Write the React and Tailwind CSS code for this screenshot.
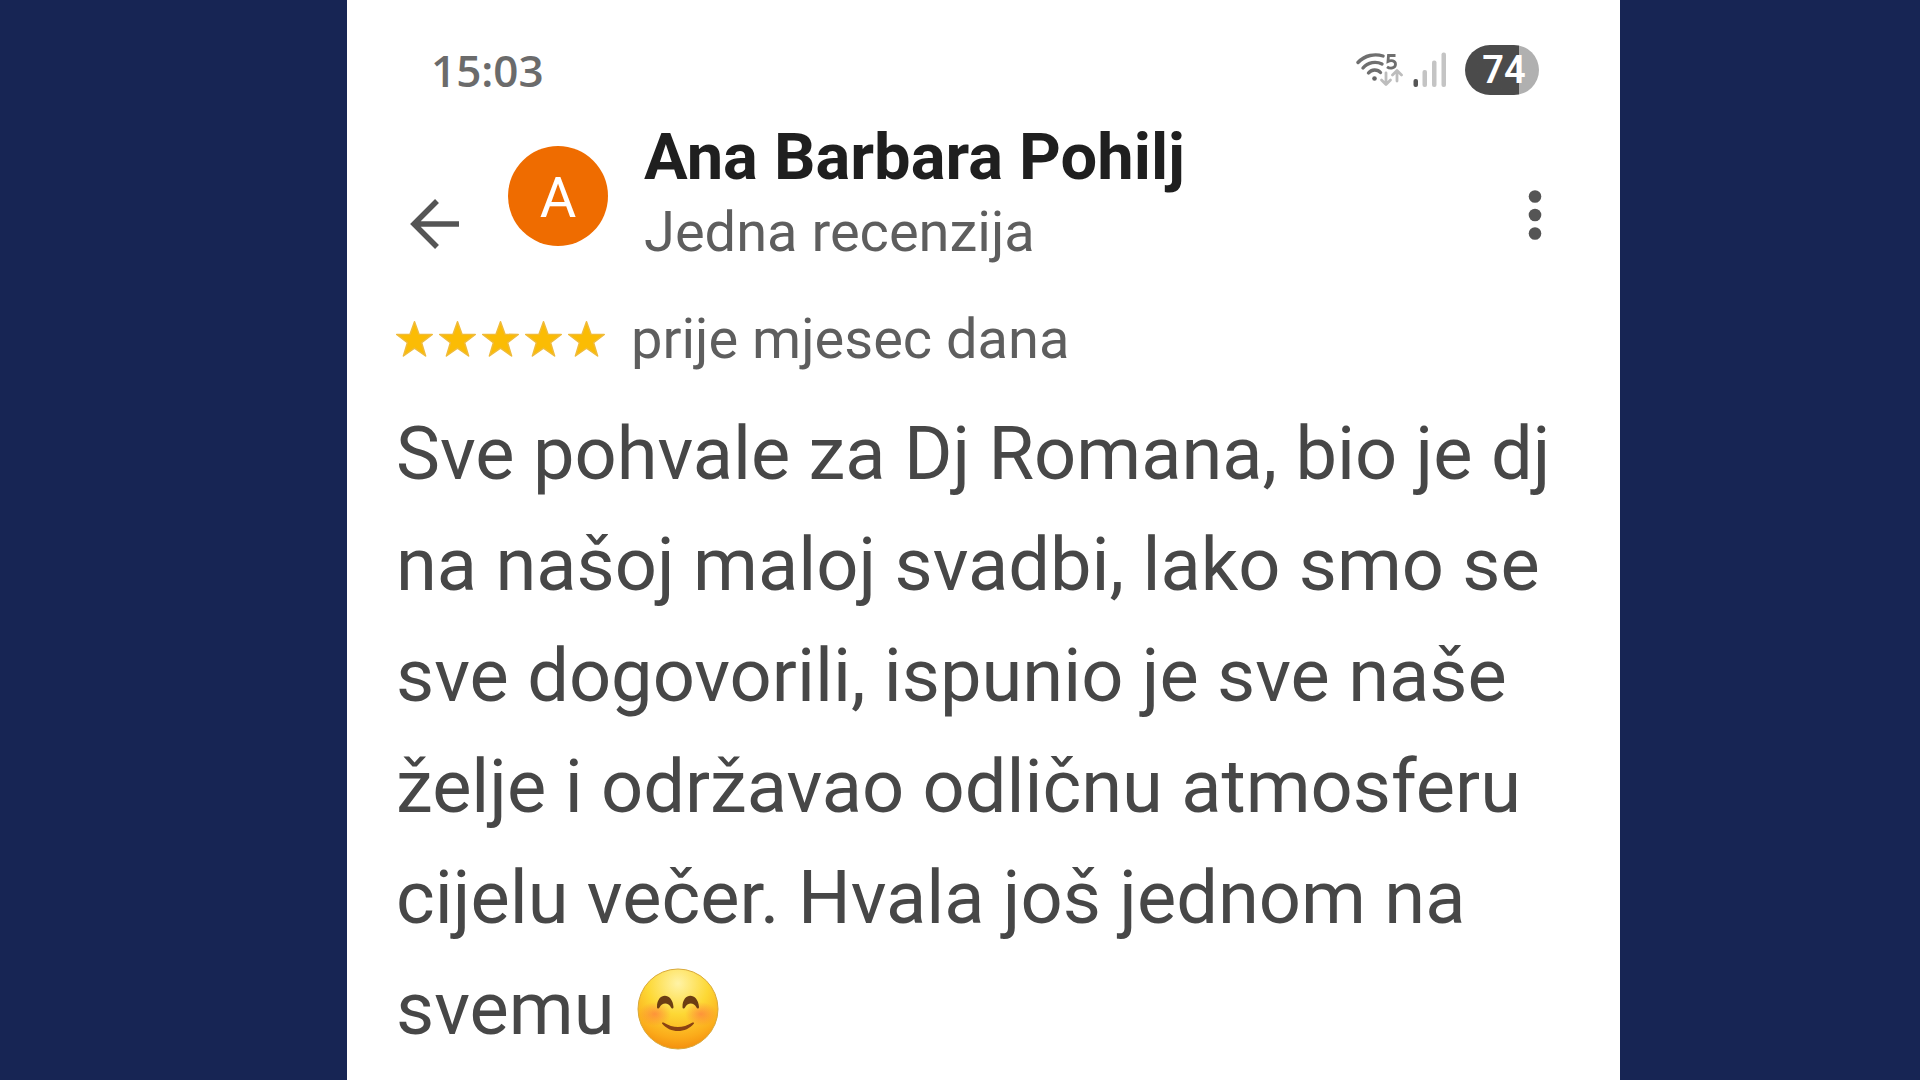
const reviewLines = [
  "Sve pohvale za Dj Romana, bio je dj",
  "na našoj maloj svadbi, lako smo se",
  "sve dogovorili, ispunio je sve naše",
  "želje i održavao odličnu atmosferu",
  "cijelu večer. Hvala još jednom na",
];

function WifiIcon() {
  return (
    <svg width="47" height="36" viewBox="0 0 47 36" fill="none" aria-label="Wi-Fi 5">
      <g stroke="#6f6f6f" strokeWidth="3.400" strokeLinecap="round">
        <path d="M2 10.500C9 3 19 1.500 27 4" />
        <path d="M7 16C12 10 20 9 26 12" />
        <path d="M12.500 21C15.500 17 21.500 17 24.500 20.500" />
      </g>
      <circle cx="18.500" cy="26.500" r="2.300" fill="#666" />
      <path d="M39.500 3.500H32.500L32 9.500C35 8 39.500 8.500 39.500 12.300C39.500 16.300 34 17 31 14.800" stroke="#6f6f6f" strokeWidth="2.800" />
      <g stroke="#bdbdbd" strokeWidth="2.800" strokeLinecap="round" strokeLinejoin="round">
        <path d="M30 21V32M25.500 28L30 32.500L34.500 28" />
        <path d="M41 29V19M36.500 23L41 18.500L45.500 23" />
      </g>
    </svg>
  );
}

function SignalIcon() {
  return (
    <svg width="34" height="36" viewBox="0 0 34 36" aria-label="Signal">
      <rect x="0.500" y="27" width="4.500" height="8" rx="2" fill="#555" />
      <rect x="9.500" y="18" width="4.500" height="17" rx="2" fill="#c4c4c4" />
      <rect x="19" y="8.500" width="4.500" height="26.500" rx="2" fill="#c4c4c4" />
      <rect x="28.500" y="0.500" width="4.500" height="34.500" rx="2" fill="#c4c4c4" />
    </svg>
  );
}

function BackIcon() {
  return (
    <svg width="50" height="50" viewBox="0 0 50 50" fill="none" stroke="#555" strokeWidth="5.500">
      <path d="M49 25H4M27 2L4 25L27 48" />
    </svg>
  );
}

function DotsIcon() {
  return (
    <svg width="14" height="52" viewBox="0 0 14 52" fill="#555">
      <circle cx="7" cy="7.500" r="6.300" />
      <circle cx="7" cy="26" r="6.300" />
      <circle cx="7" cy="44.500" r="6.300" />
    </svg>
  );
}

function Star() {
  return (
    <svg width="37" height="36" viewBox="0 0 37 36" fill="#fbbc04" stroke="#f0bb3a" strokeWidth="1.500" strokeLinejoin="round">
      <path d="M18.500 0.800L23 13.300L36.300 13.500L25.600 21.700L29.600 35L18.500 27.200L7.400 35L11.400 21.700L0.700 13.500L14 13.300Z" />
    </svg>
  );
}

function SmileEmoji() {
  return (
    <svg className="ml-[22px]" width="82" height="82" viewBox="0 0 82 82" role="img" aria-label="😊">
      <defs>
        <radialGradient id="face" cx="0.5" cy="0.18" r="0.85">
          <stop offset="0" stopColor="#fff3a6" />
          <stop offset="0.45" stopColor="#fdd835" />
          <stop offset="0.8" stopColor="#fbab1a" />
          <stop offset="1" stopColor="#f28a0c" />
        </radialGradient>
        <radialGradient id="cheek">
          <stop offset="0" stopColor="#ff7043" stopOpacity="0.6" />
          <stop offset="1" stopColor="#ff7043" stopOpacity="0" />
        </radialGradient>
      </defs>
      <circle cx="41" cy="41" r="40" fill="url(#face)" stroke="#d9a93a" strokeWidth="1" />
      <ellipse cx="18" cy="46" rx="16" ry="12" fill="url(#cheek)" />
      <ellipse cx="64" cy="46" rx="16" ry="12" fill="url(#cheek)" />
      <g fill="#6b3d13">
        <path d="M20 39C20 24 35.500 24 36.500 39C36.500 41 34.500 41 34 39.500C31.500 34 25 34 22.500 39.500C22 41 20 41 20 39Z" />
        <path d="M45.500 39C45.500 24 61 24 62 39C62 41 60 41 59.500 39.500C57 34 50.500 34 48 39.500C47.500 41 45.500 41 45.500 39Z" />
      </g>
      <path d="M25 55.500C33 65.500 49 65.500 57 55.500C57.500 54.500 56 54 55 54.800C46 60.500 36 60.500 27 54.800C26 54 24.500 54.500 25 55.500Z" fill="#8a4213" />
    </svg>
  );
}

function StatusBar() {
  return (
    <div className="flex h-[120px] items-center justify-between pt-5 pr-[81px] pl-[84px]">
      <time className="font-['Open_Sans',sans-serif] text-[44px] leading-[50px] font-semibold text-[#6b6b6b]">15:03</time>
      <div className="flex items-center">
        <WifiIcon />
        <div className="ml-[10px]">
          <SignalIcon />
        </div>
        <div className="ml-[18px] flex h-[50px] w-[74px] items-center justify-center rounded-full bg-linear-to-r from-[#4b4b4b] from-73% to-[#b0b0b0] to-73% pl-1 text-[38px] font-semibold text-white">
          74
        </div>
      </div>
    </div>
  );
}

export default function App() {
  return (
    <div className="grid min-h-screen grid-cols-[347fr_1273fr_300fr] bg-[#172554] font-[Roboto,sans-serif]">
      <main className="col-start-2 bg-white">
        <StatusBar />

        <header className="flex items-start pr-[78px] pl-[63px]">
          <button type="button" aria-label="Natrag" className="mt-[79px]">
            <BackIcon />
          </button>
          <div className="mt-[26px] ml-12 flex size-[100px] items-center justify-center rounded-full bg-[#ef6c00] pt-1 text-[56px] text-white">
            A
          </div>
          <div className="ml-9 flex-1">
            <h1 className="text-[65px] leading-[74px] font-bold text-[#1f1f1f]">Ana Barbara Pohilj</h1>
            <p className="text-[56px] leading-[76px] text-[#5e5e5e]">Jedna recenzija</p>
          </div>
          <button type="button" aria-label="Više opcija" className="mt-[69px]">
            <DotsIcon />
          </button>
        </header>

        <section className="pt-[33px] pl-[49px]">
          <div className="flex items-center gap-[26px]">
            <div className="flex gap-[6px]" role="img" aria-label="5 od 5 zvjezdica">
              <Star />
              <Star />
              <Star />
              <Star />
              <Star />
            </div>
            <span className="text-[56px] leading-[72px] text-[#5e5e5e]">prije mjesec dana</span>
          </div>

          <p className="mt-[23px] text-[74px] leading-[111px] text-[#474747]">
            {reviewLines.map((line) => (
              <span key={line} className="block whitespace-nowrap">{line}</span>
            ))}
            <span className="flex items-center">
              svemu
              <SmileEmoji />
            </span>
          </p>
        </section>
      </main>
    </div>
  );
}
